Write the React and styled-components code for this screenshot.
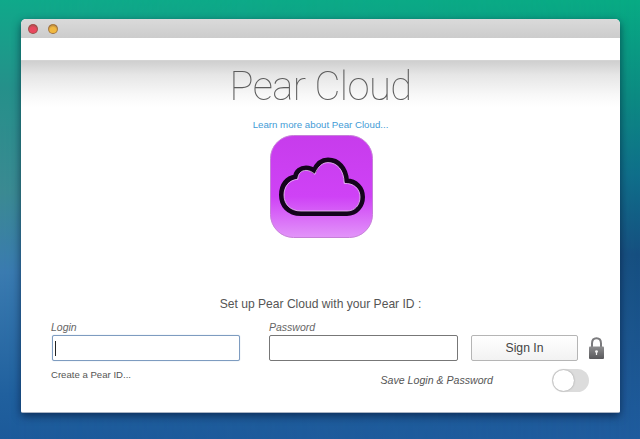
import React from "react";
import styled, { createGlobalStyle } from "styled-components";

const GlobalStyle = createGlobalStyle`
  html, body {
    margin: 0;
    padding: 0;
    height: 100%;
    overflow: hidden;
  }
  #root {
    height: 100%;
  }
`;

const CloudIcon = () => (
  <svg width="103" height="103" viewBox="0 0 103 103">
    <defs>
      <linearGradient id="tile" x1="0" y1="0" x2="0" y2="1">
        <stop offset="0" stopColor="#c73cec" />
        <stop offset="0.6" stopColor="#cf42f6" />
        <stop offset="1" stopColor="#e294f9" />
      </linearGradient>
    </defs>
    <rect x="0.5" y="0.5" width="102" height="102" rx="23" fill="url(#tile)" stroke="#c67fd8" />
    <path
      d="M31 78.5 C18 78.5 11.5 70 11.5 60 C11.5 50 17 43 25.5 42 C26 36 31 33 36 33 C39 33 42 34 44 36 C47 29 52 25 58 25 C68 25 76 33 76.5 46 C86 46 92.5 53 92.5 62 C92.5 71 86 78.5 77 78.5 Z"
      fill="none"
      stroke="#14041c"
      strokeWidth="5"
      strokeLinejoin="round"
    />
    <path
      d="M31 76 C20 76 14 69 14 60 C14 52 19 45 27.8 44.2 C28 38 32 35.4 36 35.4 C39 35.4 42 36.7 44.9 39.3 C48 31 53 27.6 58 27.6 C67 27.6 74 35 74.2 48.4 C84 48 90 54 90 62 C90 70 85 76 77 76 Z"
      fill="none"
      stroke="#f0c8fa"
      strokeWidth="0.8"
    />
  </svg>
);

const LockIcon = () => (
  <svg width="15" height="22" viewBox="0 0 15 22">
    <defs>
      <linearGradient id="lockBody" x1="0" y1="0" x2="0" y2="1">
        <stop offset="0" stopColor="#8d8d8f" />
        <stop offset="1" stopColor="#58585b" />
      </linearGradient>
    </defs>
    <path d="M3 10 V6.5 C3 3 4.8 1.2 7.5 1.2 C10.2 1.2 12 3 12 6.5 V10" fill="none" stroke="#7b7b7e" strokeWidth="2" />
    <rect x="0" y="9.5" width="15" height="12.5" rx="1" fill="url(#lockBody)" />
    <circle cx="7.5" cy="14.6" r="1.4" fill="#f2f2f2" />
    <rect x="6.9" y="14.6" width="1.2" height="3.4" fill="#f2f2f2" />
  </svg>
);

export default function App() {
  return (
    <Desktop>
      <GlobalStyle />
      <Window>
        <TitleBar>
          <Light color="#e8485f" />
          <Light color="#f0b840" />
        </TitleBar>
        <Band />
        <Content>
          <Title>Pear Cloud</Title>
          <LearnMore>Learn more about Pear Cloud...</LearnMore>
          <IconWrap>
            <CloudIcon />
          </IconWrap>
          <Setup>Set up Pear Cloud with your Pear ID :</Setup>
          <Form>
            <LoginField>
              <Label>Login</Label>
              <LoginBox>
                <Caret />
              </LoginBox>
            </LoginField>
            <PasswordField>
              <Label>Password</Label>
              <PasswordBox />
            </PasswordField>
            <SignIn>Sign In</SignIn>
            <LockWrap>
              <LockIcon />
            </LockWrap>
          </Form>
          <Footer>
            <CreateLink>Create a Pear ID...</CreateLink>
            <SaveRow>
              <SaveLabel>Save Login &amp; Password</SaveLabel>
              <Toggle>
                <Knob />
              </Toggle>
            </SaveRow>
          </Footer>
        </Content>
      </Window>
    </Desktop>
  );
}

const Desktop = styled.div`
  position: relative;
  width: 640px;
  height: 439px;
  box-sizing: border-box;
  padding: 19px 20px 26px 21px;
  background: linear-gradient(180deg, #08ab84 0%, #0c8a82 22%, #0f6e8a 40%, #164f80 58%, #1c5690 80%, #1f5c9e 100%);
  font-family: "Liberation Sans", Arial, sans-serif;

  &::before {
    content: "";
    position: absolute;
    inset: 0;
    background: linear-gradient(180deg, #0fa98a 0%, #25908a 20%, #3b8a92 44%, #3a7bb0 62%, #20609e 90%, #1c5a9a 100%);
    -webkit-mask-image: linear-gradient(90deg, #000 0%, transparent 100%);
    mask-image: linear-gradient(90deg, #000 0%, transparent 100%);
  }
`;

const Window = styled.div`
  position: relative;
  height: 100%;
  display: flex;
  flex-direction: column;
  box-sizing: border-box;
  border-radius: 5px 5px 2px 2px;
  border-bottom: 1px solid #aab4c4;
  overflow: hidden;
  background: #fff;
  box-shadow: 0 3px 9px rgba(0, 15, 45, 0.6);
`;

const TitleBar = styled.div`
  height: 19px;
  flex: none;
  display: flex;
  align-items: center;
  gap: 10px;
  padding-left: 7px;
  background: linear-gradient(180deg, #dadada, #cccccc);
`;

const Light = styled.span`
  width: 10px;
  height: 10px;
  box-sizing: border-box;
  border-radius: 50%;
  background: radial-gradient(circle at 50% 70%, ${(p) => p.color} 45%, rgba(110, 70, 50, 0.9) 120%);
  border: 1px solid rgba(120, 80, 60, 0.55);
`;

const Band = styled.div`
  height: 22px;
  flex: none;
  background: #fff;
`;

const Content = styled.div`
  flex: 1;
  display: flex;
  flex-direction: column;
  background: linear-gradient(180deg, #cfcfcf 0, #e6e6e6 14px, #f8f8f8 34px, #fff 46px);
  border-top: 1px solid #d4d4d4;
`;

const Title = styled.h1`
  margin: 2px 0 1px;
  text-align: center;
  font-family: Roboto, sans-serif;
  font-weight: 100;
  font-size: 40px;
  line-height: 48px;
  letter-spacing: -0.6px;
  color: #555;
  opacity: 0.95;
  will-change: opacity;
`;

const LearnMore = styled.a`
  margin-top: 7px;
  text-align: center;
  font-size: 9.7px;
  line-height: 12px;
  color: #3f9bd6;
`;

const IconWrap = styled.div`
  margin: 4px 0 0 1px;
  display: flex;
  justify-content: center;
  height: 103px;
`;

const Setup = styled.div`
  margin-top: 58px;
  text-align: center;
  font-size: 12.1px;
  line-height: 16px;
  color: #555;
`;

const Form = styled.div`
  margin-top: 9px;
  padding-left: 30px;
  display: flex;
  align-items: flex-end;
`;

const LoginField = styled.div`
  display: flex;
  flex-direction: column;
  gap: 2px;
  margin-right: 29px;
`;

const PasswordField = styled.div`
  display: flex;
  flex-direction: column;
  gap: 2px;
  margin-right: 13px;
`;

const Label = styled.label`
  font-size: 10.5px;
  line-height: 12px;
  font-style: italic;
  color: #666;
`;

const LoginBox = styled.div`
  width: 188px;
  height: 26px;
  box-sizing: border-box;
  margin-left: 1px;
  display: flex;
  align-items: center;
  padding-left: 2px;
  border: 1px solid #7e9cc0;
  border-radius: 2px;
  background: #fff;
  box-shadow: 0 0 1px #9db8d8;
`;

const Caret = styled.span`
  width: 1px;
  height: 15px;
  background: #222;
`;

const PasswordBox = styled.div`
  width: 189px;
  height: 26px;
  box-sizing: border-box;
  border: 1px solid #777;
  border-radius: 2px;
  background: #fff;
`;

const SignIn = styled.button`
  width: 107px;
  height: 26px;
  padding: 0;
  border: 1px solid #b5b5b5;
  border-radius: 2px;
  background: linear-gradient(180deg, #fff, #f2f2f2);
  font-family: "Liberation Sans", Arial, sans-serif;
  font-size: 12.2px;
  color: #444;
`;

const LockWrap = styled.div`
  margin-left: 11px;
  height: 26px;
  display: flex;
  align-items: center;
`;

const Footer = styled.div`
  margin-top: 8px;
  padding-left: 30px;
  display: flex;
  align-items: flex-start;
  justify-content: space-between;
`;

const CreateLink = styled.a`
  margin-top: -1px;
  font-size: 9.6px;
  line-height: 13px;
  color: #555;
`;

const SaveRow = styled.div`
  display: flex;
  align-items: center;
  gap: 59px;
  margin-right: 31px;
`;

const SaveLabel = styled.span`
  margin-top: -2px;
  font-size: 10.6px;
  font-style: italic;
  color: #555;
`;

const Toggle = styled.div`
  width: 37px;
  height: 23px;
  border-radius: 12px;
  background: #dcdcdc;
  display: flex;
  align-items: center;
  padding-left: 1px;
  box-sizing: border-box;
`;

const Knob = styled.span`
  width: 21px;
  height: 21px;
  border-radius: 50%;
  background: #fff;
  box-shadow: 0 0 2px rgba(0, 0, 0, 0.35);
`;
